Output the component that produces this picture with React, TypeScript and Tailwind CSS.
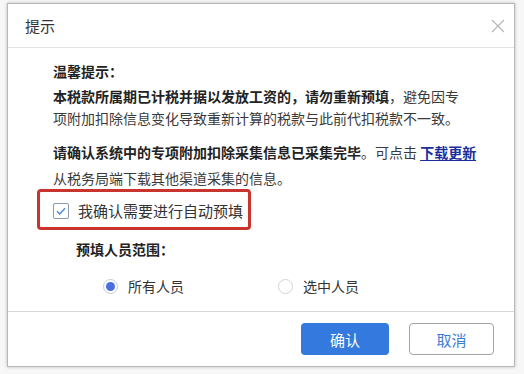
import React from "react";

const font = { fontFamily: '"Noto Sans CJK SC", "Noto Sans", sans-serif' };

export default function App() {
  return (
    <div
      className="w-[524px] h-[374px] overflow-hidden bg-[#f7f7f7] pt-[3px] pl-[7px]"
      style={font}
    >
      <div className="w-[508px] h-[364px] bg-white border border-[#b9b9b9] shadow-[0_0_3px_rgba(0,0,0,0.25)] flex flex-col">
        {/* Header */}
        <div className="h-[44px] shrink-0 border-b border-[#e3e3e3] flex items-center justify-between pl-[17px] pr-[9px]">
          <span className="text-[15px] text-[#333] leading-none">提示</span>
          <svg width="14" height="14" viewBox="0 0 14 14" className="mt-[1px]">
            <path d="M1 1 L13 13 M13 1 L1 13" stroke="#b5b5b5" strokeWidth="1.1" fill="none" />
          </svg>
        </div>

        {/* Body */}
        <div className="flex-1 pl-[29px] pt-[11px] text-[14px] text-[#3a3a3a]">
          <div className="pl-[16px] leading-[24px] font-bold text-[#222]">温馨提示：</div>
          <div className="pl-[16px] mt-[2px] leading-[22px] whitespace-nowrap">
            <span className="font-bold text-[#222]">本税款所属期已计税并据以发放工资的，请勿重新预填</span>
            <span>，避免因专</span>
            <br />
            <span>项附加扣除信息变化导致重新计算的税款与此前代扣税款不一致。</span>
          </div>
          <div className="pl-[16px] mt-[10px] leading-[26px] whitespace-nowrap">
            <span className="font-bold text-[#222]">请确认系统中的专项附加扣除采集信息已采集完毕</span>
            <span>。可点击 </span>
            <span className="font-bold text-[#1a2f9c] underline underline-offset-2">下载更新</span>
            <br />
            <span>从税务局端下载其他渠道采集的信息。</span>
          </div>

          {/* Highlighted checkbox */}
          <div className="mt-[-2px] w-[214px] h-[41px] border-[3px] border-[#c9352e] rounded-[4px] flex items-center pl-[13px] pt-[2px] gap-[9px]">
            <div className="w-[16px] h-[16px] rounded-[2px] border border-[#8b9aae] bg-white flex items-center justify-center">
              <svg width="12" height="12" viewBox="0 0 12 12">
                <path d="M2 6.2 L4.8 9 L10 3.2" stroke="#4a8ad0" strokeWidth="1.4" fill="none" />
              </svg>
            </div>
            <span className="text-[15px] text-[#333] leading-none">我确认需要进行自动预填</span>
          </div>

          <div className="ml-[39px] mt-[7px] leading-[24px] font-bold text-[#222]">预填人员范围：</div>

          <div className="ml-[66px] mt-[13px] h-[24px] flex items-center">
            <div className="w-[175px] flex items-center gap-[10px]">
              <div className="w-[15px] h-[15px] rounded-full border border-[#c3cde0] bg-white flex items-center justify-center">
                <div className="w-[9px] h-[9px] rounded-full bg-[#4a6ee0]" />
              </div>
              <span className="leading-none text-[#333]">所有人员</span>
            </div>
            <div className="flex items-center gap-[10px]">
              <div className="w-[15px] h-[15px] rounded-full border border-[#d3d3d3] bg-white" />
              <span className="leading-none text-[#333]">选中人员</span>
            </div>
          </div>
        </div>

        {/* Footer */}
        <div className="h-[55px] shrink-0 border-t border-[#d8d8d8] flex justify-end items-start pt-[11px] pr-[20px] gap-[20px]">
          <button className="w-[88px] h-[32px] rounded-[4px] bg-[#3479dd] text-white text-[15px] leading-none">
            确认
          </button>
          <button className="w-[85px] h-[32px] rounded-[4px] bg-white border border-[#a3a3a3] text-[#3b7bd4] text-[15px] leading-none">
            取消
          </button>
        </div>
      </div>
    </div>
  );
}
